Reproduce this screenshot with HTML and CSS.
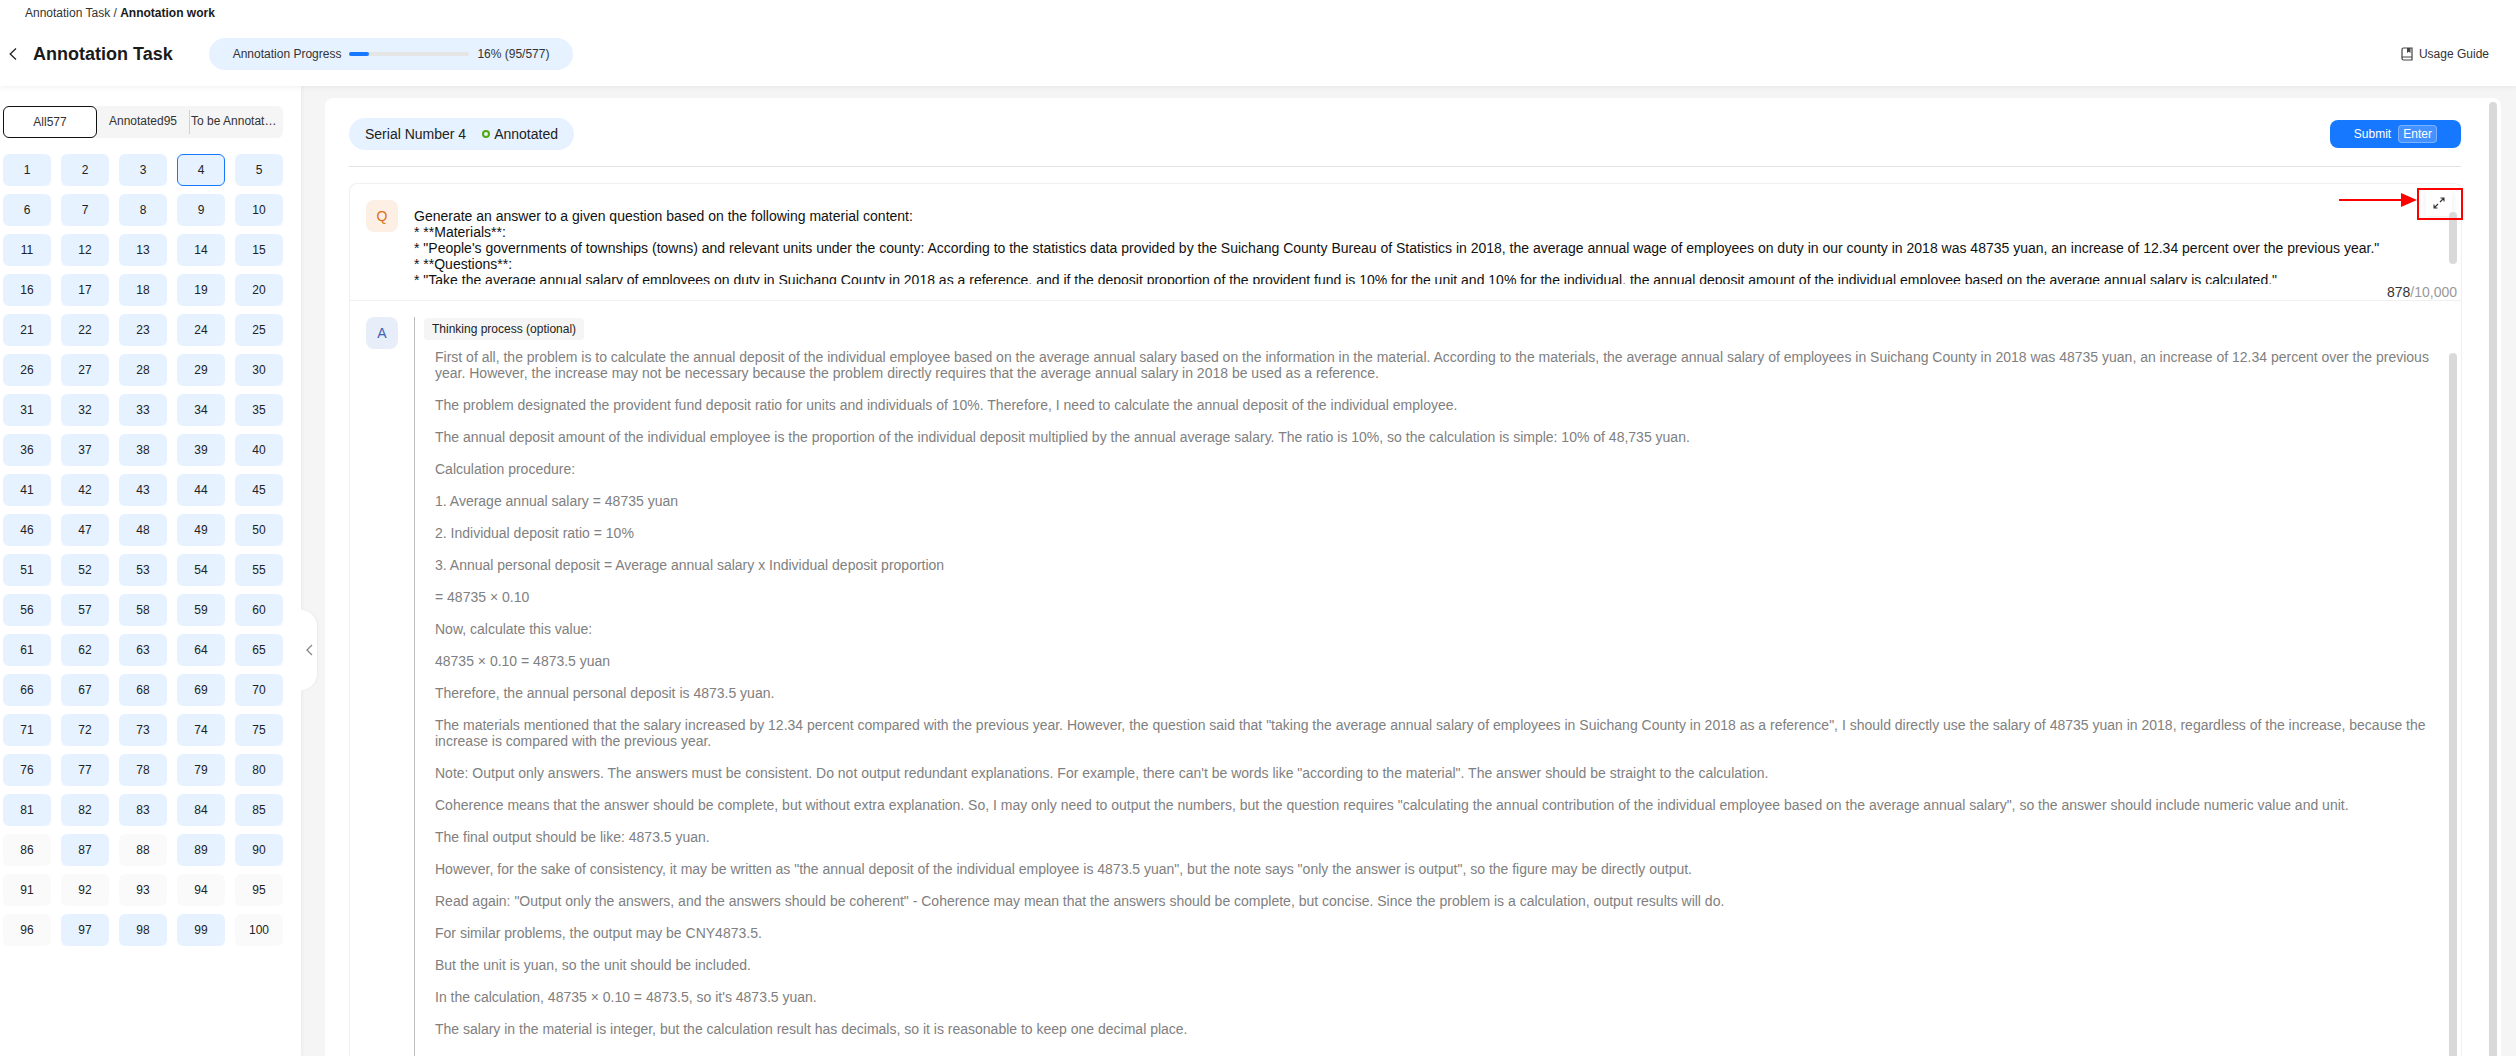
FILE: index.html
```html
<!DOCTYPE html>
<html lang="en">
<head>
<meta charset="utf-8">
<title>Annotation work</title>
<link rel="stylesheet" href="styles.css">
</head>
<body>
<header class="header">
  <div class="crumbs">Annotation Task / <b>Annotation work</b></div>
  <div class="titlebar">
    <svg class="back" width="8" height="12" viewBox="0 0 8 12"><path d="M7 .5 1.2 6 7 11.5" fill="none" stroke="#222" stroke-width="1.3"/></svg>
    <h1 class="title">Annotation Task</h1>
    <div class="progress">
      <span>Annotation Progress</span>
      <div class="track"><div class="fill" style="width:20px"></div></div>
      <span>16% (95/577)</span>
    </div>
    <div class="guide">
      <svg width="12" height="14" viewBox="0 0 12 14"><path d="M2.5 1h8.5v12H2.5A1.5 1.5 0 0 1 1 11.500V2.500A1.500 1.500 0 0 1 2.500 1ZM1 11.500A1.500 1.500 0 0 1 2.500 10H11" fill="none" stroke="#444" stroke-width="1.200"/><path d="M6 1h3.500v5L7.750 4.800 6 6Z" fill="#444"/></svg>
      <span>Usage Guide</span>
    </div>
  </div>
</header>
<div class="body">
  <aside class="sidebar">
    <div class="tabs">
      <div class="tab tab-active">All577</div>
      <div class="tab">Annotated95</div>
      <div class="tab tab-last">To be Annotated482</div>
    </div>
    <div class="grid">
      <div class="cell">1</div><div class="cell">2</div><div class="cell">3</div><div class="cell cell-current">4</div><div class="cell">5</div>
      <div class="cell">6</div><div class="cell">7</div><div class="cell">8</div><div class="cell">9</div><div class="cell">10</div>
      <div class="cell">11</div><div class="cell">12</div><div class="cell">13</div><div class="cell">14</div><div class="cell">15</div>
      <div class="cell">16</div><div class="cell">17</div><div class="cell">18</div><div class="cell">19</div><div class="cell">20</div>
      <div class="cell">21</div><div class="cell">22</div><div class="cell">23</div><div class="cell">24</div><div class="cell">25</div>
      <div class="cell">26</div><div class="cell">27</div><div class="cell">28</div><div class="cell">29</div><div class="cell">30</div>
      <div class="cell">31</div><div class="cell">32</div><div class="cell">33</div><div class="cell">34</div><div class="cell">35</div>
      <div class="cell">36</div><div class="cell">37</div><div class="cell">38</div><div class="cell">39</div><div class="cell">40</div>
      <div class="cell">41</div><div class="cell">42</div><div class="cell">43</div><div class="cell">44</div><div class="cell">45</div>
      <div class="cell">46</div><div class="cell">47</div><div class="cell">48</div><div class="cell">49</div><div class="cell">50</div>
      <div class="cell">51</div><div class="cell">52</div><div class="cell">53</div><div class="cell">54</div><div class="cell">55</div>
      <div class="cell">56</div><div class="cell">57</div><div class="cell">58</div><div class="cell">59</div><div class="cell">60</div>
      <div class="cell">61</div><div class="cell">62</div><div class="cell">63</div><div class="cell">64</div><div class="cell">65</div>
      <div class="cell">66</div><div class="cell">67</div><div class="cell">68</div><div class="cell">69</div><div class="cell">70</div>
      <div class="cell">71</div><div class="cell">72</div><div class="cell">73</div><div class="cell">74</div><div class="cell">75</div>
      <div class="cell">76</div><div class="cell">77</div><div class="cell">78</div><div class="cell">79</div><div class="cell">80</div>
      <div class="cell">81</div><div class="cell">82</div><div class="cell">83</div><div class="cell">84</div><div class="cell">85</div>
      <div class="cell cell-todo">86</div><div class="cell">87</div><div class="cell cell-todo">88</div><div class="cell">89</div><div class="cell">90</div>
      <div class="cell cell-todo">91</div><div class="cell cell-todo">92</div><div class="cell cell-todo">93</div><div class="cell cell-todo">94</div><div class="cell cell-todo">95</div>
      <div class="cell cell-todo">96</div><div class="cell">97</div><div class="cell">98</div><div class="cell">99</div><div class="cell cell-todo">100</div>
    </div>
    <div class="collapse">
      <svg width="7" height="12" viewBox="0 0 7 12"><path d="M6 1 1 6l5 5" fill="none" stroke="#888" stroke-width="1.300"/></svg>
    </div>
  </aside>
  <main class="main">
    <section class="card">
      <div class="card-scroll"></div>
      <div class="toolbar">
        <div class="serial">
          <span>Serial Number 4</span>
          <span class="status"><i class="dot"></i>Annotated</span>
        </div>
        <button class="submit"><span>Submit</span><span class="kbd">Enter</span></button>
      </div>
      <div class="qa">
        <div class="question">
          <div class="badge badge-q">Q</div>
          <div class="q-text">Generate an answer to a given question based on the following material content:<br>* **Materials**:<br>* "People's governments of townships (towns) and relevant units under the county: According to the statistics data provided by the Suichang County Bureau of Statistics in 2018, the average annual wage of employees on duty in our county in 2018 was 48735 yuan, an increase of 12.34 percent over the previous year."<br>* **Questions**:<br>* "Take the average annual salary of employees on duty in Suichang County in 2018 as a reference, and if the deposit proportion of the provident fund is 10% for the unit and 10% for the individual, the annual deposit amount of the individual employee based on the average annual salary is calculated."</div>
          <div class="expand">
            <svg width="12" height="12" viewBox="0 0 12 12"><path d="M7 5 11 1M7.500 1H11V4.500M5 7 1 11M1 7.500V11H4.500" fill="none" stroke="#333" stroke-width="1.100"/></svg>
          </div>
          <div class="q-scroll"></div>
          <div class="counter"><span class="count-now">878</span>/10,000</div>
          <svg class="arrow" width="78" height="14" viewBox="0 0 78 14"><path d="M0 7H64" stroke="#f00" stroke-width="2"/><path d="M62 0 78 7 62 14Z" fill="#f00"/></svg>
          <div class="callout"></div>
        </div>
        <div class="answer">
          <div class="badge badge-a">A</div>
          <div class="a-body">
            <div class="chip">Thinking process (optional)</div>
            <div class="a-text">
              <p>First of all, the problem is to calculate the annual deposit of the individual employee based on the average annual salary based on the information in the material. According to the materials, the average annual salary of employees in Suichang County in 2018 was 48735 yuan, an increase of 12.34 percent over the previous year. However, the increase may not be necessary because the problem directly requires that the average annual salary in 2018 be used as a reference.</p>
              <p>The problem designated the provident fund deposit ratio for units and individuals of 10%. Therefore, I need to calculate the annual deposit of the individual employee.</p>
              <p>The annual deposit amount of the individual employee is the proportion of the individual deposit multiplied by the annual average salary. The ratio is 10%, so the calculation is simple: 10% of 48,735 yuan.</p>
              <p>Calculation procedure:</p>
              <p>1. Average annual salary = 48735 yuan</p>
              <p>2. Individual deposit ratio = 10%</p>
              <p>3. Annual personal deposit = Average annual salary x Individual deposit proportion</p>
              <p>= 48735 × 0.10</p>
              <p>Now, calculate this value:</p>
              <p>48735 × 0.10 = 4873.5 yuan</p>
              <p>Therefore, the annual personal deposit is 4873.5 yuan.</p>
              <p>The materials mentioned that the salary increased by 12.34 percent compared with the previous year. However, the question said that "taking the average annual salary of employees in Suichang County in 2018 as a reference", I should directly use the salary of 48735 yuan in 2018, regardless of the increase, because the increase is compared with the previous year.</p>
              <p>Note: Output only answers. The answers must be consistent. Do not output redundant explanations. For example, there can't be words like "according to the material". The answer should be straight to the calculation.</p>
              <p>Coherence means that the answer should be complete, but without extra explanation. So, I may only need to output the numbers, but the question requires "calculating the annual contribution of the individual employee based on the average annual salary", so the answer should include numeric value and unit.</p>
              <p>The final output should be like: 4873.5 yuan.</p>
              <p>However, for the sake of consistency, it may be written as "the annual deposit of the individual employee is 4873.5 yuan", but the note says "only the answer is output", so the figure may be directly output.</p>
              <p>Read again: "Output only the answers, and the answers should be coherent" - Coherence may mean that the answers should be complete, but concise. Since the problem is a calculation, output results will do.</p>
              <p>For similar problems, the output may be CNY4873.5.</p>
              <p>But the unit is yuan, so the unit should be included.</p>
              <p>In the calculation, 48735 × 0.10 = 4873.5, so it's 4873.5 yuan.</p>
              <p>The salary in the material is integer, but the calculation result has decimals, so it is reasonable to keep one decimal place.</p>
            </div>
          </div>
          <div class="a-scroll"></div>
        </div>
      </div>
    </section>
  </main>
</div>
</body>
</html>
```
FILE: styles.css
```css
* { box-sizing: border-box; }
html, body { margin: 0; height: 100%; }
body {
  display: flex;
  flex-direction: column;
  height: 100vh;
  overflow: hidden;
  background: #fff;
  color: #1f1f1f;
  font-family: "Liberation Sans", Arial, sans-serif;
  font-size: 12px;
}
.header {
  position: relative;
  z-index: 2;
  height: 86px;
  background: #fff;
  box-shadow: 0 1px 6px rgba(0, 0, 0, .07);
}
.crumbs { height: 24px; padding: 6px 0 0 25px; line-height: 14px; color: #333; }
.crumbs b { color: #1a1a1a; }
.titlebar { display: flex; align-items: center; height: 60px; padding: 0 27px 0 9px; }
.back { flex: none; }
.title { margin: 0 36px 0 16px; font-size: 18px; line-height: 24px; font-weight: 700; color: #1a1a1a; }
.progress {
  display: flex;
  align-items: center;
  gap: 8px;
  height: 32px;
  padding: 0 24px;
  border-radius: 16px;
  background: #e6f2ff;
  color: #333;
}
.track { width: 120px; height: 4px; border-radius: 2px; background: #e5e5e5; }
.fill { height: 100%; border-radius: 2px; background: #1677ff; }
.guide { display: flex; align-items: center; gap: 6px; margin-left: auto; color: #333; }
.body { flex: 1; display: flex; min-height: 0; background: #f5f5f5; }
.sidebar {
  position: relative;
  z-index: 1;
  flex: none;
  width: 301px;
  padding: 20px 18px 0 3px;
  background: #fff;
  box-shadow: 1px 0 4px rgba(0, 0, 0, .05);
}
.tabs { display: flex; height: 32px; border-radius: 6px; background: #f5f5f5; }
.tab {
  flex: 1;
  min-width: 0;
  line-height: 30px;
  text-align: center;
  color: #333;
  white-space: nowrap;
  overflow: hidden;
  text-overflow: ellipsis;
}
.tab-active { flex: none; width: 94px; border: 1px solid #111; border-radius: 6px; background: #fff; line-height: 31px; }
.tab-last { padding-left: 1px; border-left: 1px solid #d0d0d0; height: 20px; margin-top: 4px; line-height: 22px; overflow: hidden; text-align: left; height: 24px; }
.grid { display: grid; grid-template-columns: repeat(5, 48px); gap: 8px 10px; margin-top: 16px; }
.cell {
  height: 32px;
  line-height: 32px;
  text-align: center;
  border-radius: 6px;
  background: #e6f2ff;
  color: #222;
}
.cell-current { border: 1px solid #1677ff; line-height: 30px; }
.cell-todo { background: #fafafa; }
.collapse {
  position: absolute;
  left: 100%;
  top: 524px;
  display: flex;
  align-items: center;
  padding-left: 5px;
  width: 16px;
  height: 80px;
  border-radius: 0 16px 16px 0;
  background: #fff;
  box-shadow: 1px 0 2px rgba(0, 0, 0, .05);
}
.main { flex: 1; min-width: 0; display: flex; padding: 12px 15px 0 24px; }
.card {
  position: relative;
  flex: 1;
  min-width: 0;
  display: flex;
  flex-direction: column;
  padding: 20px 40px 0 24px;
  border-radius: 8px 8px 0 0;
  background: #fff;
}
.card-scroll { position: absolute; right: 4px; top: 4px; bottom: 0; width: 8px; border-radius: 4px 4px 0 0; background: #d9d9d9; }
.toolbar {
  display: flex;
  align-items: center;
  justify-content: space-between;
  padding-bottom: 16px;
  border-bottom: 1px solid #e2e2e2;
}
.serial {
  display: flex;
  align-items: center;
  gap: 16px;
  height: 32px;
  padding: 0 16px;
  border-radius: 16px;
  background: #e6f2ff;
  font-size: 14px;
  color: #222;
}
.status { display: flex; align-items: center; gap: 4px; }
.dot { width: 8px; height: 8px; border: 2px solid #52a80e; border-radius: 50%; }
.submit {
  display: flex;
  align-items: center;
  justify-content: center;
  gap: 7px;
  width: 131px;
  height: 28px;
  padding: 0;
  border: 0;
  border-radius: 8px;
  background: #1677ff;
  color: #fff;
  font: inherit;
}
.kbd {
  width: 39px;
  height: 18px;
  line-height: 16px;
  border: 1px solid rgba(255, 255, 255, .3);
  border-radius: 4px;
  background: rgba(255, 255, 255, .2);
}
.qa {
  flex: 1;
  min-height: 0;
  display: flex;
  flex-direction: column;
  margin: 16px -1px 0 0;
  border: 1px solid #f0f0f0;
  border-bottom: 0;
  border-radius: 8px 8px 0 0;
  font-size: 14px;
  line-height: 16px;
}
.question {
  position: relative;
  display: flex;
  gap: 16px;
  height: 117px;
  padding: 16px;
  border-bottom: 1px solid #f0f0f0;
}
.badge {
  flex: none;
  width: 32px;
  height: 32px;
  line-height: 32px;
  border-radius: 8px;
  text-align: center;
  font-size: 14px;
}
.badge-q { background: #fdefe3; color: #e0700f; }
.badge-a { background: #e8eef9; color: #3862b4; }
.q-text { flex: 1; min-width: 0; height: 76px; margin-top: 8px; padding-right: 10px; overflow: hidden; color: #111; }
.expand {
  position: absolute;
  right: 9px;
  top: 6px;
  display: flex;
  align-items: center;
  justify-content: center;
  width: 26px;
  height: 26px;
  background: #fff;
  box-shadow: 0 2px 8px rgba(0, 0, 0, .08);
}
.q-scroll { position: absolute; right: 4px; top: 28px; width: 8px; height: 52px; border-radius: 4px; background: #d9d9d9; }
.counter { position: absolute; right: 4px; bottom: 0; color: #999; background: #fff; }
.count-now { color: #333; }
.arrow { position: absolute; right: 44px; top: 9px; }
.callout { position: absolute; right: -2px; top: 4px; width: 46px; height: 32px; border: 2px solid #f00; }
.answer { position: relative; flex: 1; min-height: 0; display: flex; gap: 16px; padding: 16px 0 0 16px; }
.a-body { flex: 1; min-width: 0; padding: 1px 20px 0 9px; border-left: 1px solid #bdbdbd; overflow: hidden; }
.chip {
  display: inline-block;
  vertical-align: top;
  height: 22px;
  padding: 0 8px;
  line-height: 22px;
  border-radius: 4px;
  background: #f5f5f5;
  font-size: 12px;
  color: #222;
}
.a-text { margin-top: 9px; padding-left: 11px; color: #808080; }
.a-text p { margin: 0 0 16px; }
.a-scroll { position: absolute; right: 4px; top: 52px; bottom: 0; width: 8px; border-radius: 4px 4px 0 0; background: #d9d9d9; }
```
